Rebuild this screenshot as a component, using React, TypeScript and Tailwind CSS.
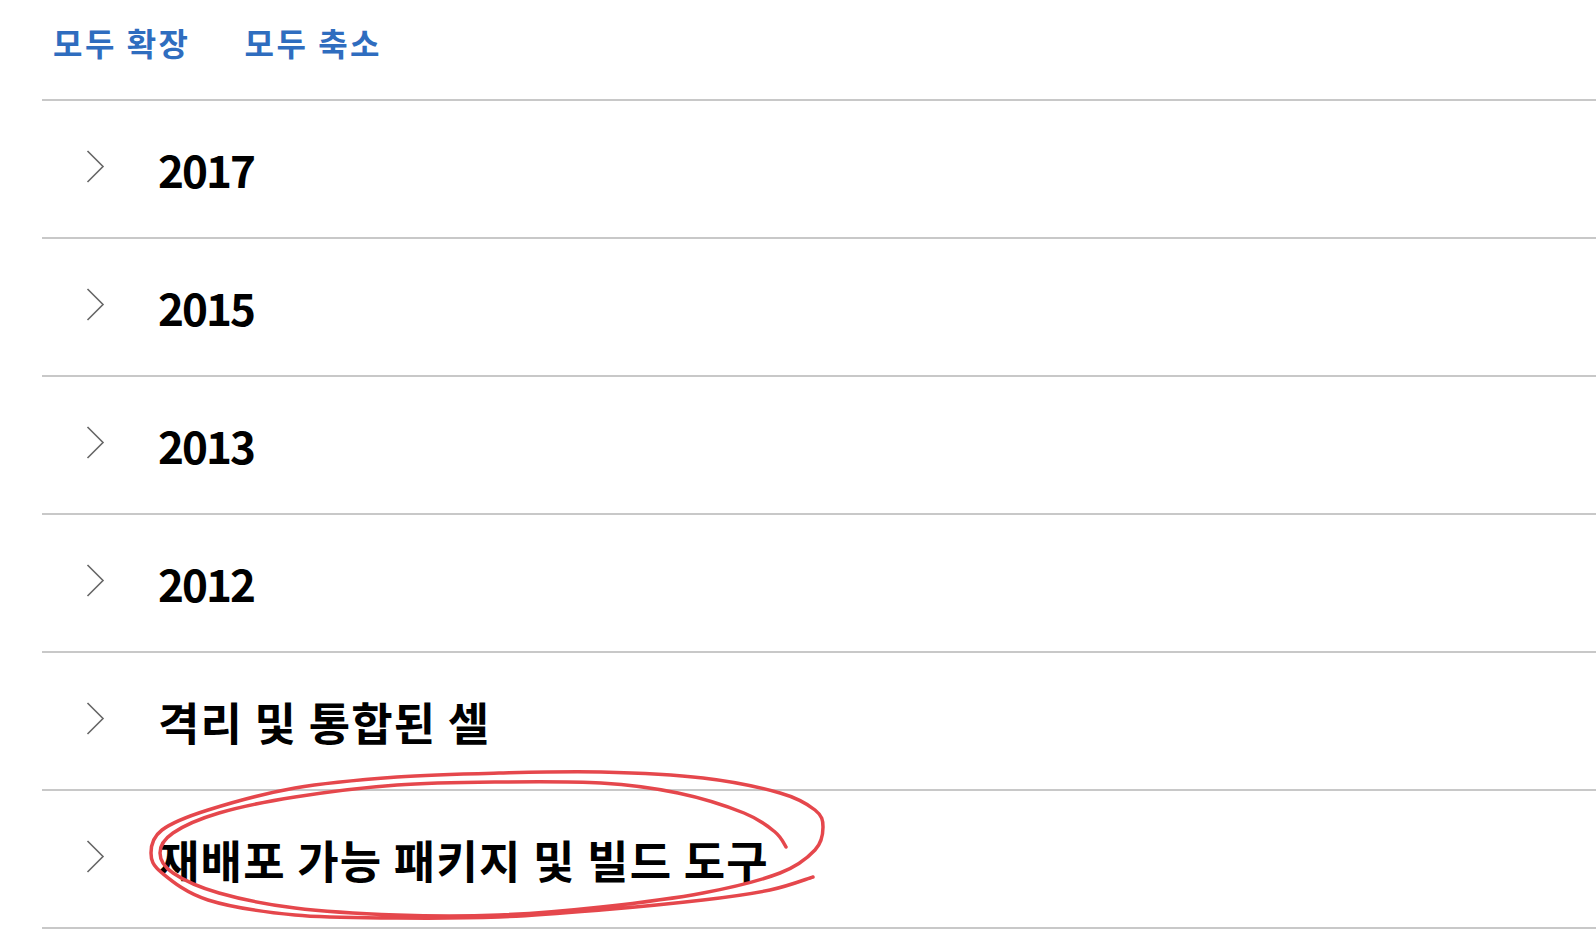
import React from "react";

const rows = [
  "2017",
  "2015",
  "2013",
  "2012",
  "격리 및 통합된 셀",
  "재배포 가능 패키지 및 빌드 도구",
];

const loop: [number, number][] = [
  [786, 847], [775, 832], [744, 813], [678, 793], [601, 783], [499, 782],
  [397, 785], [295, 797], [219, 813], [173, 833], [160, 853], [173, 873],
  [219, 893], [295, 908], [397, 915], [499, 915], [601, 907], [703, 893],
  [780, 873], [815, 850], [823, 827], [815, 810], [780, 793], [703, 778],
  [601, 772], [499, 773], [397, 777], [295, 788], [208, 810], [162, 830],
  [151, 853], [162, 873], [208, 900], [295, 915], [397, 918], [499, 917],
  [601, 910], [703, 900], [770, 890], [813, 877],
];

function smoothPath(pts: [number, number][]) {
  let d = `M ${pts[0][0]} ${pts[0][1]}`;
  for (let i = 0; i < pts.length - 1; i++) {
    const p0 = pts[i - 1] || pts[i];
    const p1 = pts[i];
    const p2 = pts[i + 1];
    const p3 = pts[i + 2] || p2;
    const c1x = p1[0] + (p2[0] - p0[0]) / 6;
    const c1y = p1[1] + (p2[1] - p0[1]) / 6;
    const c2x = p2[0] - (p3[0] - p1[0]) / 6;
    const c2y = p2[1] - (p3[1] - p1[1]) / 6;
    d += ` C ${c1x.toFixed(1)} ${c1y.toFixed(1)} ${c2x.toFixed(1)} ${c2y.toFixed(1)} ${p2[0]} ${p2[1]}`;
  }
  return d;
}

function Chevron() {
  return (
    <svg width="19" height="33" viewBox="0 0 19 33" className="shrink-0 -mt-[5px]">
      <polyline
        points="1.5,1 17,16.5 1.5,32"
        fill="none"
        stroke="#666666"
        strokeWidth="1.6"
      />
    </svg>
  );
}

export default function App() {
  return (
    <div
      className="relative w-[1596px] h-[944px] overflow-hidden bg-white"
      style={{ fontFamily: '"Noto Sans CJK KR", "Noto Sans", sans-serif' }}
    >
      <div className="pl-[42px]">
        <div className="h-[101px] border-b-2 border-[#c8c8c8] flex items-start pt-[26px] pl-[11px] gap-[54px]">
          <span className="text-[32px] leading-none font-bold tracking-[2.5px] text-[#2f6dbf]">모두 확장</span>
          <span className="text-[32px] leading-none font-bold tracking-[2.5px] text-[#2f6dbf]">모두 축소</span>
        </div>
        {rows.map((r) => {
          const numeric = /^\d+$/.test(r);
          return (
            <div
              key={r}
              className="h-[138px] border-b-2 border-[#c8c8c8] flex items-center pl-[44px]"
            >
              <Chevron />
              <span
                className={
                  numeric
                    ? "ml-[53px] text-[44px] leading-none font-bold text-black tracking-[-2px]"
                    : "ml-[53px] text-[45px] leading-none font-bold text-black tracking-[1.2px]"
                }
              >
                {r}
              </span>
            </div>
          );
        })}
      </div>
      <svg
        className="absolute inset-0 pointer-events-none"
        width="1596"
        height="944"
        viewBox="0 0 1596 944"
      >
        <path
          d={smoothPath(loop)}
          fill="none"
          stroke="#e5474c"
          strokeWidth="3.5"
          strokeLinecap="round"
          strokeLinejoin="round"
        />
      </svg>
    </div>
  );
}
